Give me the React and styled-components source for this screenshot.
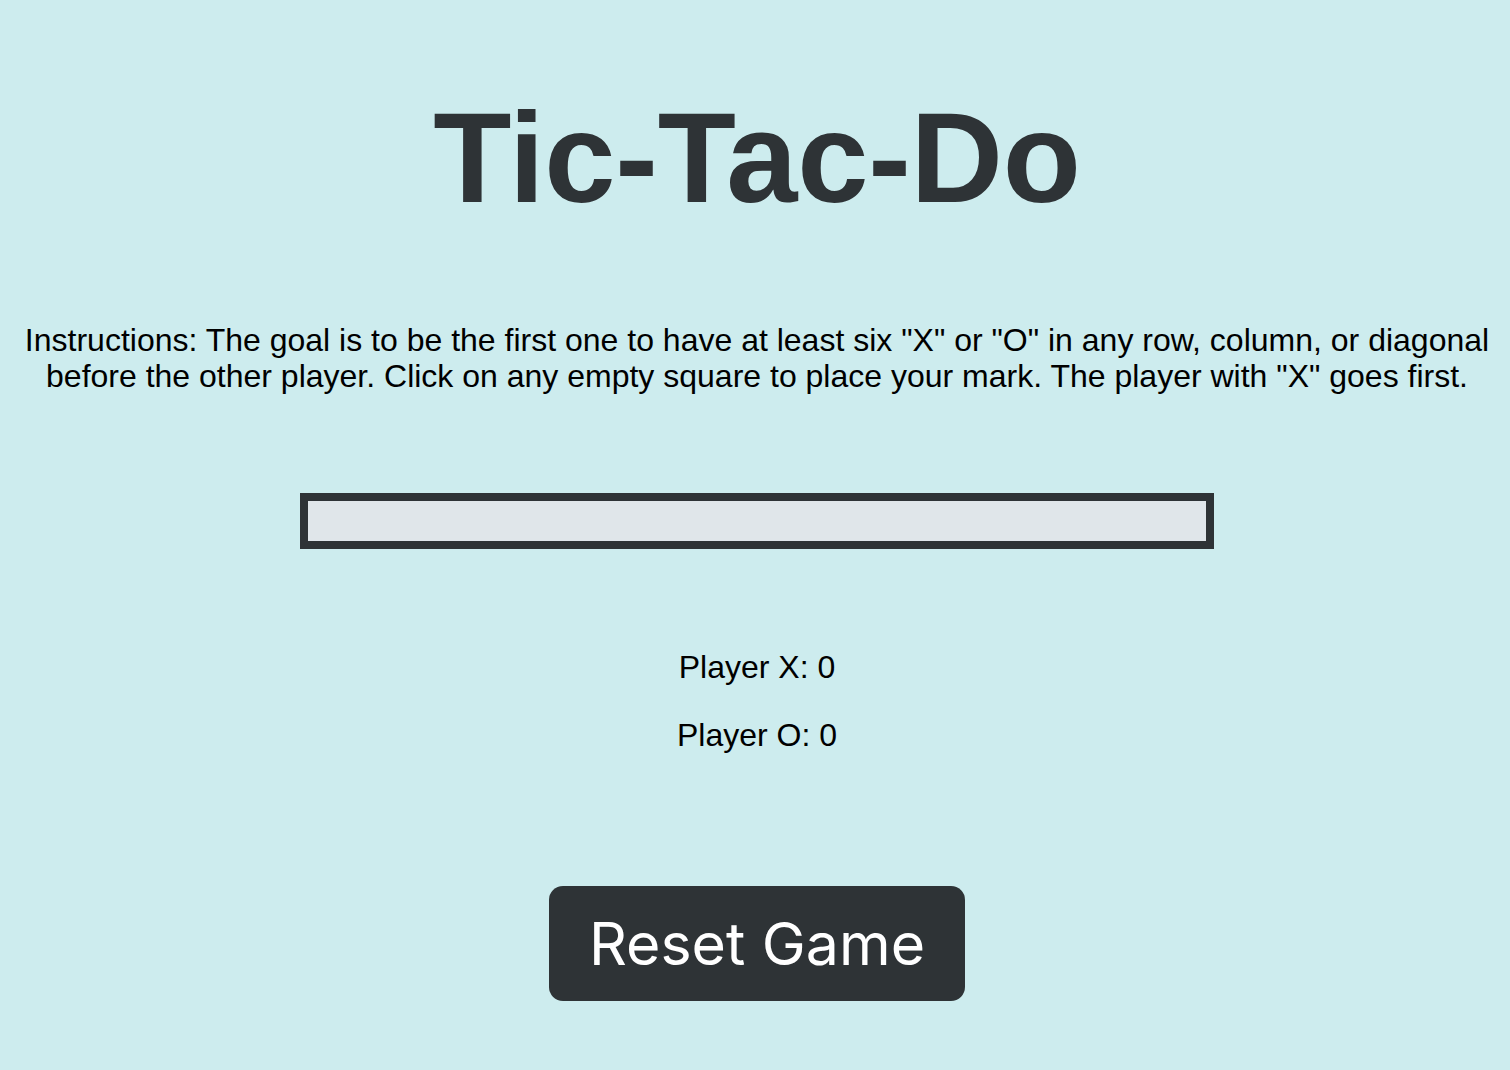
import React, { useState } from 'react'
import styled, { createGlobalStyle } from 'styled-components';

const GlobalStyle = createGlobalStyle`
  html, body {
    margin: 0;
    padding: 0;
    background-color: #cdecee;
  }
  body {
    font-family: "Liberation Sans", Arial, sans-serif;
  }
`;

function App() {
    const [board, setBoard] = useState([])
    const [score, setScore] = useState({ X: 0, O: 0 })

    const resetGame = () => {
        setBoard([]);
    }

    return (
        <>
            <GlobalStyle />
            <Container>
                <Title>Tic-Tac-Do</Title>
                <Instructions>
                    Instructions: The goal is to be the first one to have at least six "X" or "O" in any row, column, or diagonal before the other player. Click on any empty square to place your mark. The player with "X" goes first.
                </Instructions>
                <Board>
                    {board.map((cell, index) => (
                        <Cell key={index}>{cell}</Cell>
                    ))}
                </Board>
                <Scores>
                    <Score>Player X: {score.X}</Score>
                    <Score>Player O: {score.O}</Score>
                </Scores>
                <ResetButton onClick={resetGame}>Reset Game</ResetButton>
            </Container>
        </>
    )
}

const Container = styled.div`
  min-height: 1070px;
  display: flex;
  flex-direction: column;
  align-items: center;
  padding: 0 18px 0 22px;
  box-sizing: border-box;
`;

const Title = styled.h1`
  margin: 84px 0 0;
  font-size: 128px;
  line-height: 147px;
  font-weight: 700;
  letter-spacing: -0.2px;
  color: #2e3336;
`;

const Instructions = styled.p`
  margin: 91px 0 0;
  font-size: 32px;
  line-height: 36px;
  text-align: center;
  color: #000;
`;

const Board = styled.div`
  margin-top: 99px;
  width: 898px;
  min-height: 40px;
  border: 8px solid #2e3336;
  background-color: #e0e6ea;
  display: grid;
  grid-template-columns: repeat(10, 1fr);
`;

const Cell = styled.div`
  height: 60px;
  border: 1px solid #2e3336;
`;

const Scores = styled.div`
  margin-top: 100px;
  display: flex;
  flex-direction: column;
  align-items: center;
  gap: 32px;
`;

const Score = styled.p`
  margin: 0;
  font-size: 32px;
  line-height: 36px;
  color: #000;
`;

const ResetButton = styled.button`
  margin-top: 133px;
  width: 416px;
  height: 115px;
  border: none;
  border-radius: 14px;
  background-color: #2e3336;
  color: #fff;
  font-family: Inter, "Liberation Sans", sans-serif;
  font-size: 59px;
  cursor: pointer;
`;

export default App
